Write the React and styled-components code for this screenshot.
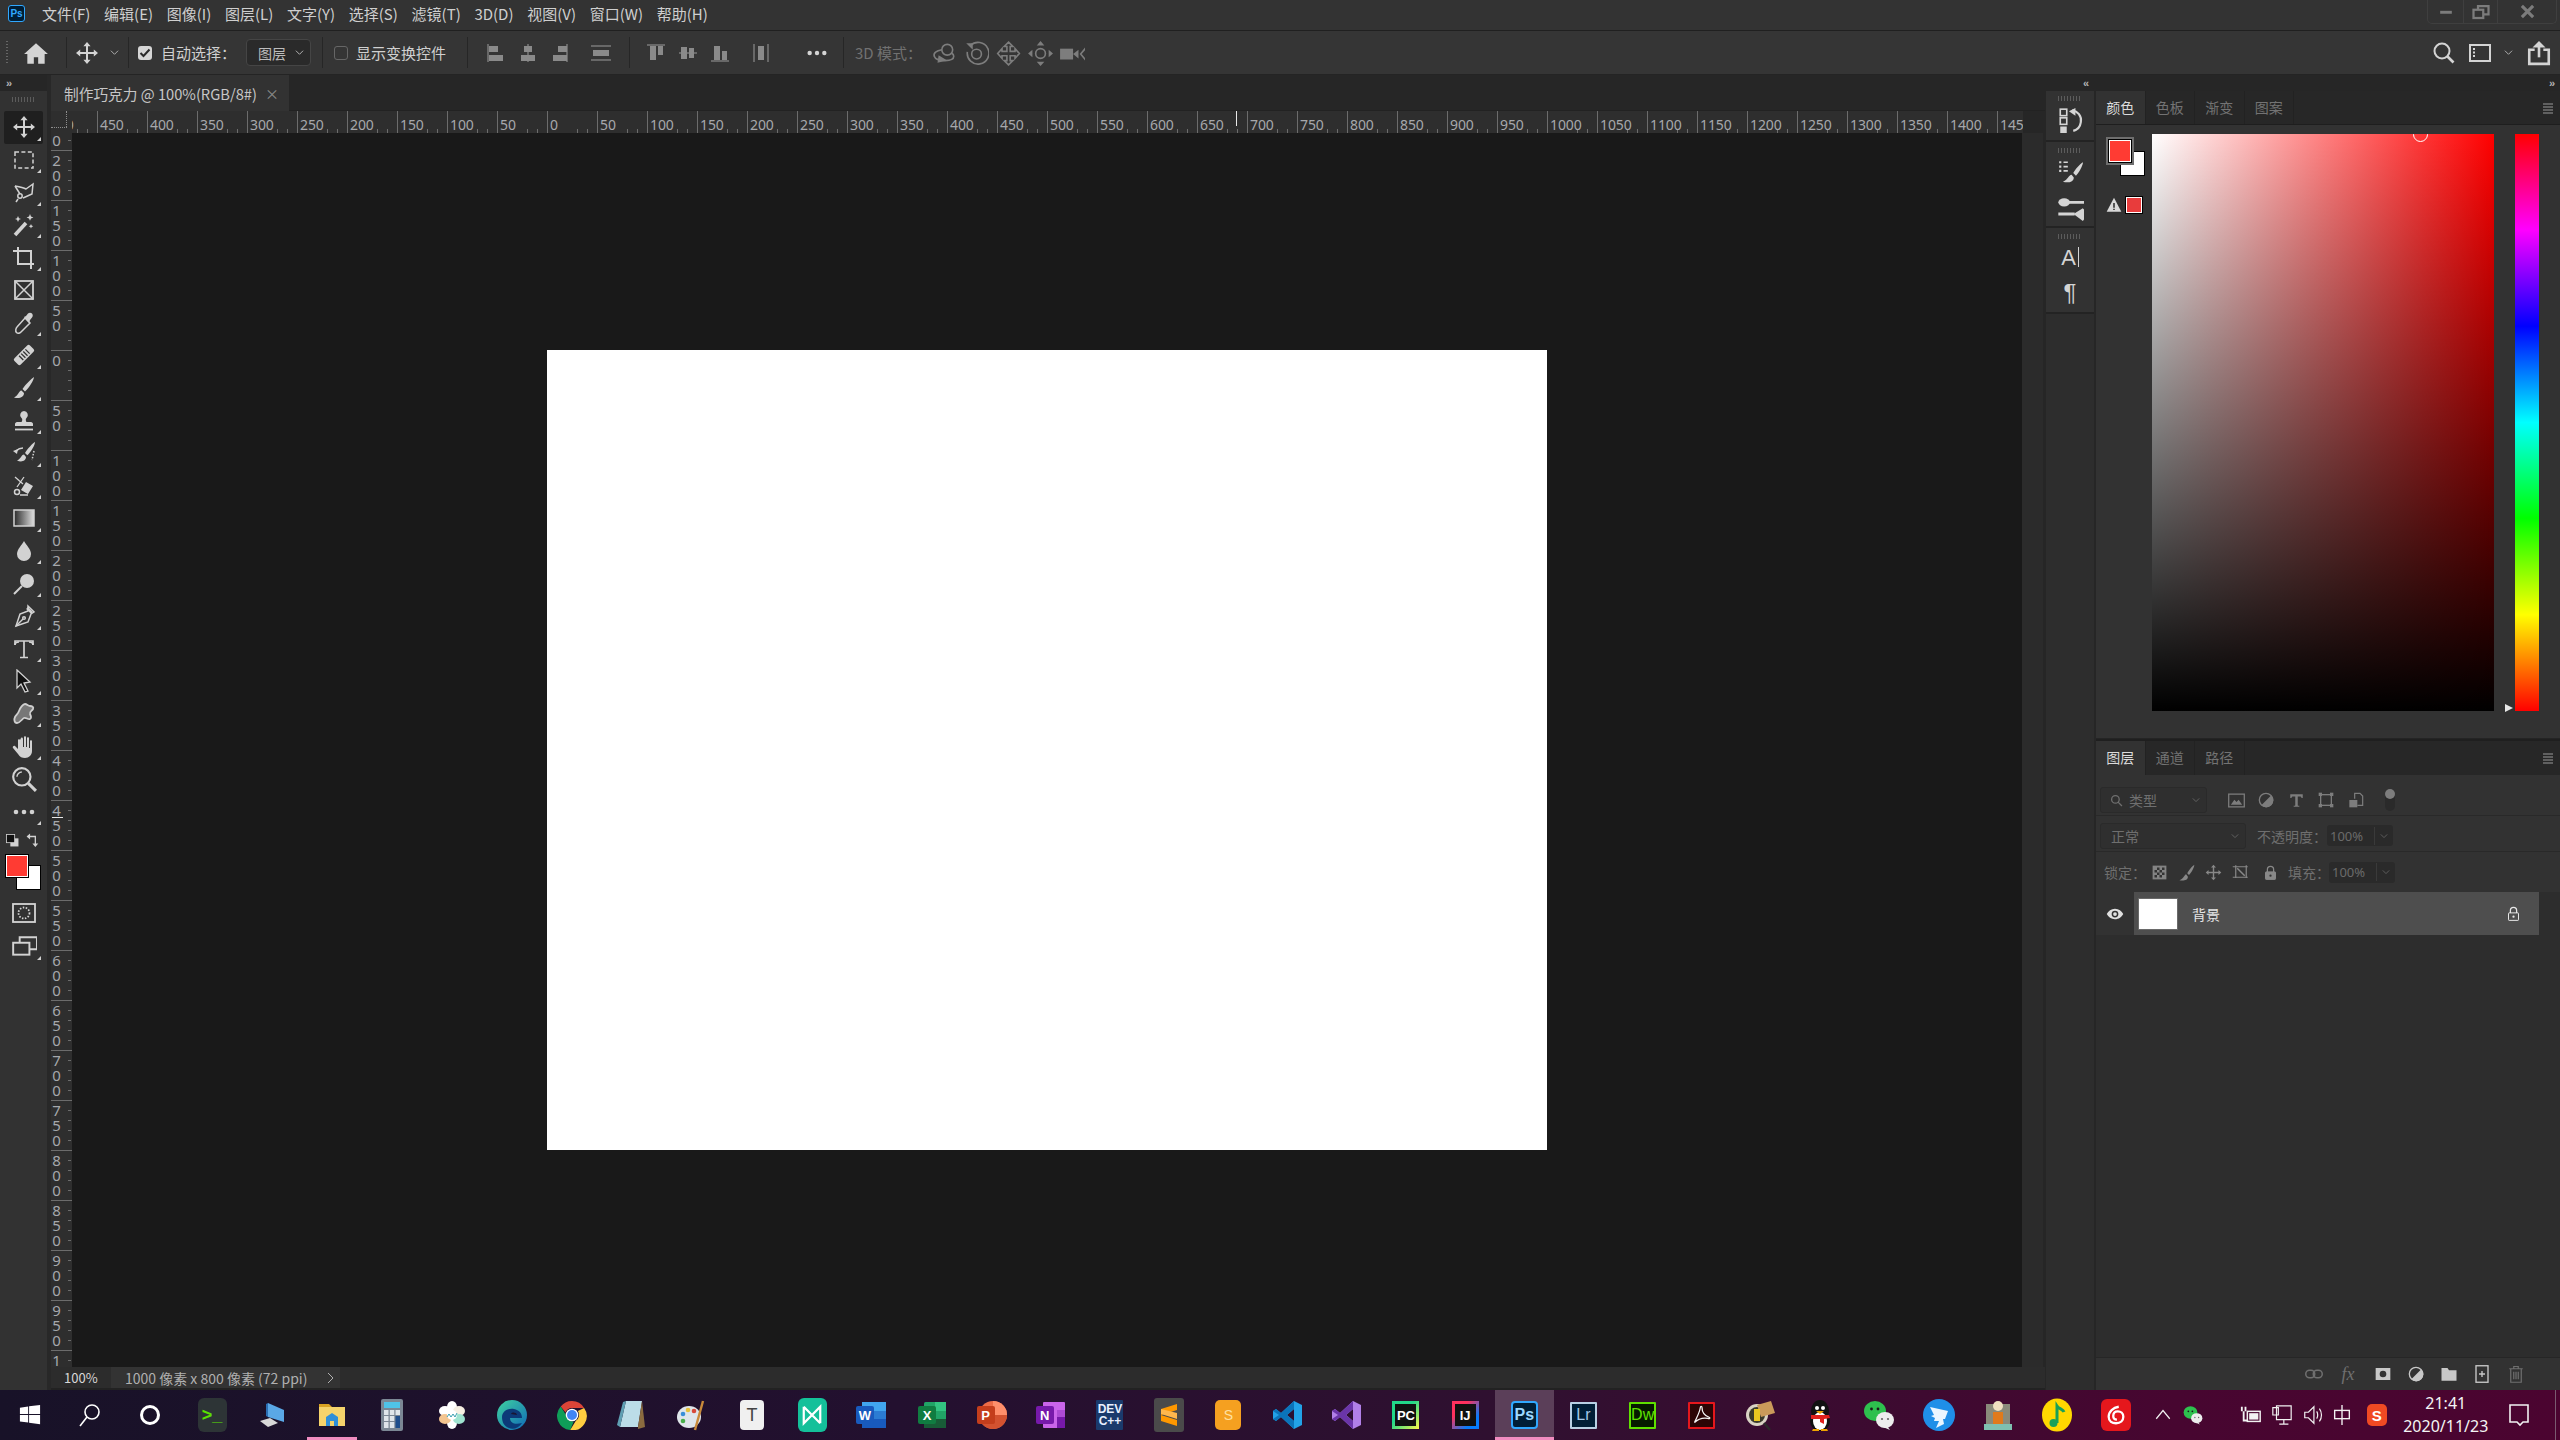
import styled, { createGlobalStyle } from 'styled-components'

const GlobalStyle = createGlobalStyle`
  html, body {
    margin: 0;
    padding: 0;
    background: #323232;
    font-family: "Noto Sans CJK SC", "Noto Sans", sans-serif;
  }
  * { box-sizing: border-box; }
`

const Frame = styled.div`
  width: 2560px;
  height: 1440px;
  display: flex;
  flex-direction: column;
  overflow: hidden;
  background: #323232;
`

/* ---------- menu bar ---------- */
const MenuBar = styled.div`
  height: 31px;
  flex: none;
  padding-bottom: 3px;
  display: flex;
  align-items: center;
  background: #333333;
  border-bottom: 1px solid #202020;
  color: #cfcfcf;
  font-size: 15px;
`
const PsLogo = styled.div`
  width: 17px;
  height: 17px;
  margin: 0 17px 0 8px;
  border: 1px solid #31a8ff;
  border-radius: 3px;
  background: #001e36;
  color: #31a8ff;
  font: 700 10px/15px "Liberation Sans", sans-serif;
  text-align: center;
`
const MenuItem = styled.span`
  margin-right: 13.7px;
  white-space: nowrap;
`
const WindowButtons = styled.div`
  margin-left: auto;
  margin-right: 3px;
  align-self: flex-start;
  height: 24px;
  display: flex;
  border: 1px solid #3f3f3f;
  border-top: none;
  border-radius: 0 0 5px 5px;
  color: #7c7c7c;
`
const WindowButton = styled.div`
  width: ${p => p.$w}px;
  display: flex;
  align-items: center;
  justify-content: center;
  border-left: ${p => (p.$first ? 'none' : '1px solid #3f3f3f')};
`

/* ---------- options bar ---------- */
const OptionsBar = styled.div`
  height: 44px;
  flex: none;
  display: flex;
  align-items: center;
  background: #353535;
  border-bottom: 1px solid #242424;
  color: #d0d0d0;
  font-size: 15px;
`
const Grip = styled.div`
  width: 2px;
  height: 24px;
  margin: 0 6px;
  background: repeating-linear-gradient(#666 0 1px, transparent 1px 3px);
`
const Slot = styled.div`
  width: ${p => p.$w || 32}px;
  margin-left: ${p => p.$ml || 0}px;
  margin-top: ${p => p.$mt || 0}px;
  flex: none;
  display: flex;
  align-items: center;
  justify-content: center;
  color: ${p => p.$color || '#d4d4d4'};
`
const Divider = styled.div`
  width: 1px;
  height: 31px;
  flex: none;
  margin-left: ${p => p.$ml || 0}px;
  background: #262626;
`
const CheckBox = styled.div`
  width: 14px;
  height: 14px;
  flex: none;
  margin-left: ${p => p.$ml || 0}px;
  border-radius: 3px;
  display: flex;
  align-items: center;
  justify-content: center;
  background: ${p => (p.$on ? '#d6d6d6' : 'transparent')};
  border: ${p => (p.$on ? 'none' : '1px solid #666')};
  color: #2a2a2a;
`
const OptLabel = styled.span`
  width: ${p => p.$w}px;
  margin-left: ${p => p.$ml || 0}px;
  flex: none;
  white-space: nowrap;
  color: ${p => p.$color || '#d0d0d0'};
`
const OptSelect = styled.div`
  width: 65px;
  height: 27px;
  flex: none;
  margin-left: ${p => p.$ml || 0}px;
  padding: 0 6px 0 11px;
  display: flex;
  align-items: center;
  justify-content: space-between;
  border: 1px solid #454545;
  border-radius: 4px;
  background: #2a2a2a;
  font-size: 14px;
  color: #bdbdbd;
`
const Spacer = styled.div`
  flex: 1;
`

/* ---------- workspace ---------- */
const Workspace = styled.div`
  flex: 1;
  min-height: 0;
  display: flex;
`
const ToolColumn = styled.div`
  width: 51px;
  flex: none;
  display: flex;
  flex-direction: column;
  border-right: 4px solid #282828;
  background: #323232;
`
const CollapseStrip = styled.div`
  height: 16px;
  flex: none;
  display: flex;
  align-items: center;
  justify-content: ${p => p.$align || 'flex-start'};
  padding: 0 6px;
  background: #262626;
  color: #b4b4b4;
  font: 700 11px/16px "Liberation Sans", sans-serif;
  letter-spacing: -1px;
`
const GripH = styled.div`
  width: ${p => p.$w || 24}px;
  height: 5px;
  flex: none;
  margin: ${p => p.$m || '6px auto 9px'};
  background: repeating-linear-gradient(90deg, #5c5c5c 0 1px, transparent 1px 3px);
`
const Tool = styled.div`
  position: relative;
  width: 39px;
  height: 32.6px;
  margin-left: 4px;
  margin-top: ${p => p.$mt || 0}px;
  flex: none;
  display: flex;
  align-items: center;
  justify-content: center;
  color: #d2d2d2;
  border-radius: 2px;
  background: ${p => (p.$active ? '#1f1f1f' : 'transparent')};
  &::after {
    content: '';
    display: ${p => (p.$more ? 'block' : 'none')};
    position: absolute;
    right: 2px;
    bottom: 3px;
    border-style: solid;
    border-width: 0 0 4px 4px;
    border-color: transparent transparent #cfcfcf transparent;
  }
`
const SwapRow = styled.div`
  height: 22px;
  margin-top: 1px;
  padding: 0 7px 0 6px;
  flex: none;
  display: flex;
  align-items: center;
  justify-content: space-between;
  color: #d2d2d2;
`
const ToolWell = styled.div`
  position: relative;
  width: 36px;
  height: 36px;
  margin: 3px 0 0 5px;
  flex: none;
`
const FgSwatch = styled.div`
  position: absolute;
  left: ${p => p.$x}px;
  top: ${p => p.$y}px;
  width: ${p => p.$s}px;
  height: ${p => p.$s}px;
  background: ${p => p.$color};
  border: 1px solid #fff;
  box-shadow: 0 0 0 1px #000${p => (p.$ring ? ', 0 0 0 3px #6e6e6e' : '')};
`

/* ---------- document ---------- */
const DocColumn = styled.div`
  width: 1994px;
  flex: none;
  display: flex;
  flex-direction: column;
  background: #262626;
`
const TabStrip = styled.div`
  height: 36px;
  flex: none;
  background: #262626;
  border-bottom: 1px solid #222;
`
const DocTab = styled.div`
  width: 238px;
  height: 36px;
  padding-left: 13px;
  display: flex;
  align-items: center;
  gap: 8px;
  background: #323232;
  color: #c6c6c6;
  font-size: 14.7px;
  white-space: nowrap;
`
const CloseX = styled.span`
  color: #8a8a8a;
  font-size: 14px;
`
const RulerRow = styled.div`
  height: 22px;
  flex: none;
  display: flex;
  background: #262626;
`
const RulerCorner = styled.div`
  position: relative;
  width: 21px;
  flex: none;
  background: #2e2e2e;
  &::before {
    content: '';
    position: absolute;
    left: 15px;
    top: 0;
    height: 16px;
    border-left: 1px dotted #8d8d8d;
  }
  &::after {
    content: '';
    position: absolute;
    left: 0;
    top: 16px;
    width: 16px;
    border-top: 1px dotted #8d8d8d;
  }
`
const HRuler = styled.div`
  position: relative;
  width: 1951px;
  flex: none;
  overflow: hidden;
  display: flex;
  background: #2e2e2e;
`
const HCell = styled.div`
  width: 50px;
  flex: none;
  margin-left: ${p => p.$ml || 0}px;
  padding-left: 2px;
  border-left: 1px solid #6c6c6c;
  color: #a6a8ac;
  font: 14px/27px "Noto Sans", sans-serif;
  letter-spacing: -0.1px;
  white-space: nowrap;
  background:
    linear-gradient(#6c6c6c, #6c6c6c) 29px 18px / 1px 4px no-repeat,
    linear-gradient(#6c6c6c, #6c6c6c) 39px 18px / 1px 4px no-repeat;
`
const RulerCursor = styled.div`
  position: absolute;
  left: ${p => p.$x}px;
  top: 0;
  width: 1px;
  height: 15px;
  background: #e8e8e8;
`
const DocMain = styled.div`
  flex: 1;
  min-height: 0;
  display: flex;
`
const VRuler = styled.div`
  position: relative;
  width: 21px;
  flex: none;
  overflow: hidden;
  background: #2e2e2e;
`
const VCell = styled.div`
  height: 50px;
  margin-top: ${p => p.$mt || 0}px;
  padding-top: 2px;
  border-top: 1px solid #6c6c6c;
  color: #a6a8ac;
  font: 15px/15px "Noto Sans", sans-serif;
  background: linear-gradient(#6c6c6c 1px, transparent 1px) right 1px top 9px / 3px 10px repeat-y;
`
const VDigit = styled.div`
  height: 15px;
  width: 11px;
  text-align: center;
`
const VCursor = styled.div`
  position: absolute;
  left: 1px;
  top: ${p => p.$y}px;
  width: 11px;
  height: 1px;
  background: #e8e8e8;
`
const CanvasArea = styled.div`
  flex: 1;
  display: flex;
  align-items: center;
  justify-content: center;
  background: #191919;
`
const Paper = styled.div`
  width: 1000px;
  height: 800px;
  background: #fff;
`
const VScroll = styled.div`
  width: 23px;
  flex: none;
  background: #2b2b2b;
  border-right: 2px solid #262626;
`
const StatusBar = styled.div`
  height: 23px;
  flex: none;
  display: flex;
  background: #2c2c2c;
  border-bottom: 2px solid #222;
  font-size: 14px;
  color: #b0b0b0;
`
const ZoomCell = styled.div`
  width: 60px;
  padding-left: 13px;
  color: #d8d8d8;
  font-size: 13px;
  line-height: 21px;
`
const DocInfo = styled.div`
  width: 229px;
  padding: 0 6px 0 14px;
  display: flex;
  align-items: center;
  justify-content: space-between;
  background: #333;
  white-space: nowrap;
`

/* ---------- right side ---------- */
const IconDock = styled.div`
  width: 51px;
  flex: none;
  display: flex;
  flex-direction: column;
  background: #2d2d2d;
  border-left: 1px solid #262626;
  border-right: 2px solid #262626;
`
const DockGroup = styled.div`
  height: ${p => p.$h}px;
  flex: none;
  display: flex;
  flex-direction: column;
  align-items: center;
  background: #323232;
  border-bottom: 2px solid #232323;
  color: #d4d4d4;
`
const DockIcon = styled.div`
  height: ${p => p.$h || 36}px;
  display: flex;
  align-items: center;
  justify-content: center;
`
const DockGlyph = styled.span`
  display: inline-block;
  font: ${p => p.$size}px/1 "Liberation Sans", sans-serif;
  color: #d4d4d4;
`
const Caret = styled.span`
  display: inline-block;
  width: 1px;
  height: 20px;
  margin-left: 2px;
  vertical-align: -2px;
  background: #d4d4d4;
`
const Panels = styled.div`
  flex: 1;
  min-width: 0;
  display: flex;
  flex-direction: column;
`
const PanelTabs = styled.div`
  height: 34px;
  flex: none;
  display: flex;
  align-items: stretch;
  background: #272727;
  border-bottom: ${p => (p.$flat ? 'none' : '1px solid #1e1e1e')};
  font-size: 14px;
`
const PanelTab = styled.div`
  width: 49.5px;
  padding-bottom: 2px;
  display: flex;
  align-items: center;
  justify-content: center;
  color: ${p => (p.$active ? '#dcdcdc' : '#737373')};
  background: ${p => (p.$active ? '#323232' : 'transparent')};
  border-right: 1px solid #222;
`
const PanelMenu = styled.div`
  margin-left: auto;
  padding-right: 6px;
  display: flex;
  align-items: center;
  color: #9a9a9a;
`
const ColorPanel = styled.div`
  height: 648px;
  flex: none;
  display: flex;
  flex-direction: column;
  background: #323232;
  border-bottom: 1px solid #242424;
`
const ColorBody = styled.div`
  padding-top: 9px;
  display: flex;
`
const SwatchColumn = styled.div`
  width: 56px;
  flex: none;
  display: flex;
  flex-direction: column;
  align-items: flex-start;
`
const PanelWell = styled.div`
  position: relative;
  width: 40px;
  height: 40px;
  margin: 3px 0 0 10px;
`
const GamutRow = styled.div`
  margin: 20px 0 0 10px;
  display: flex;
  align-items: center;
  gap: 4px;
  color: #d8d8d8;
`
const GamutSwatch = styled.div`
  width: 16px;
  height: 16px;
  background: #e83c3c;
  border: 1px solid #fff;
  box-shadow: 0 0 0 1px #000;
`
const ColorField = styled.div`
  position: relative;
  width: 342px;
  height: 577px;
  overflow: hidden;
  background: linear-gradient(to top, #000, rgba(0, 0, 0, 0)), linear-gradient(to right, #fff, #f00);
`
const FieldMarker = styled.div`
  position: absolute;
  left: 261px;
  top: -7px;
  width: 15px;
  height: 15px;
  border: 1px solid #fff;
  border-radius: 50%;
`
const HueWrap = styled.div`
  position: relative;
  width: 24px;
  height: 577px;
  margin-left: 21px;
  background: linear-gradient(to bottom, #f00 0%, #f0f 16.6%, #00f 33.3%, #0ff 50%, #0f0 66.6%, #ff0 83.3%, #f00 100%);
`
const HueArrow = styled.div`
  position: absolute;
  left: -10px;
  bottom: -1px;
  border-style: solid;
  border-width: 4.5px 0 4.5px 8px;
  border-color: transparent transparent transparent #e8e8e8;
`
const PanelGap = styled.div`
  height: 2px;
  flex: none;
  background: #1f1f1f;
`
const LayersPanel = styled.div`
  flex: 1;
  min-height: 0;
  display: flex;
  flex-direction: column;
  background: #323232;
`
const LayerRow = styled.div`
  height: ${p => p.$h}px;
  flex: none;
  padding: ${p => p.$pt || 0}px 0 0 4px;
  display: flex;
  align-items: center;
  border-bottom: ${p => (p.$line ? '1px solid #292929' : 'none')};
  color: #6f6f6f;
  font-size: 14px;
`
const DimSelect = styled.div`
  width: ${p => p.$w}px;
  height: 26px;
  flex: none;
  padding: 0 6px 0 ${p => p.$pl || 10}px;
  display: flex;
  align-items: center;
  gap: 6px;
  border: 1px solid #2a2a2a;
  border-radius: 3px;
  background: #2f2f2f;
  color: #6f6f6f;
`
const PushRight = styled.span`
  margin-left: auto;
  display: flex;
`
const FilterIcon = styled.div`
  width: 30px;
  flex: none;
  margin-left: ${p => p.$ml || 0}px;
  display: flex;
  justify-content: center;
  color: #7d7d7d;
`
const Toggle = styled.div`
  position: relative;
  width: 10px;
  height: 21px;
  margin-left: 14px;
  border-radius: 5px;
  background: #2a2a2a;
  &::after {
    content: '';
    position: absolute;
    left: 0;
    top: -1px;
    width: 10px;
    height: 10px;
    border-radius: 50%;
    background: #7d7d7d;
  }
`
const PercentBox = styled.div`
  width: 66px;
  height: 21px;
  flex: none;
  margin-left: ${p => p.$ml || 0}px;
  display: flex;
  align-items: center;
  background: #2a2a2a;
  border-radius: 3px;
  color: #6a6a6a;
  font: 13px "Noto Sans", sans-serif;
`
const PercentValue = styled.span`
  width: 48px;
  padding-left: 3px;
  border-right: 1px solid #3a3a3a;
`
const PercentArrow = styled.span`
  flex: 1;
  display: flex;
  justify-content: center;
`
const LockIcon = styled.div`
  width: ${p => p.$w || 28}px;
  flex: none;
  display: flex;
  justify-content: center;
  color: #888;
`
const LayerList = styled.div`
  flex: 1;
  min-height: 0;
  background: #2d2d2d;
  display: flex;
  flex-direction: column;
`
const LayerItem = styled.div`
  height: 43px;
  flex: none;
  display: flex;
`
const EyeCell = styled.div`
  width: 38px;
  flex: none;
  display: flex;
  align-items: center;
  justify-content: center;
  background: #323232;
  color: #e0e0e0;
`
const LayerBody = styled.div`
  width: 405px;
  display: flex;
  align-items: center;
  padding: 0 18px 0 5px;
  background: #4e4e4e;
  color: #e6e6e6;
  font-size: 14px;
`
const Thumb = styled.div`
  width: 38px;
  height: 30px;
  margin-right: 15px;
  background: #fff;
  box-shadow: 0 0 0 1px #6a6a6a;
`
const PanelFooter = styled.div`
  height: 33px;
  flex: none;
  padding-left: 201px;
  display: flex;
  align-items: center;
  background: #323232;
  border-top: 1px solid #262626;
`
const FooterIcon = styled.div`
  width: ${p => p.$w}px;
  flex: none;
  display: flex;
  justify-content: center;
  color: ${p => p.$color};
`
const FxText = styled.span`
  font: italic 18px/18px "Liberation Serif", serif;
  color: #6f6f6f;
`

/* ---------- taskbar ---------- */
const Taskbar = styled.div`
  height: 50px;
  flex: none;
  display: flex;
  align-items: stretch;
  background: linear-gradient(90deg, #181228 0%, #23102f 35%, #301030 60%, #470630 85%, #4b0430 100%);
  color: #fff;
`
const TaskButton = styled.div`
  position: relative;
  width: ${p => p.$w}px;
  margin-left: ${p => p.$ml || 0}px;
  flex: none;
  display: flex;
  align-items: center;
  justify-content: center;
  background: ${p => (p.$active ? '#5b3f59' : 'transparent')};
  &::after {
    content: '';
    display: ${p => (p.$open ? 'block' : 'none')};
    position: absolute;
    left: ${p => (p.$active ? 0 : 5)}px;
    right: ${p => (p.$active ? 0 : 5)}px;
    bottom: 0;
    height: 3px;
    background: #f08cc0;
  }
`
const Tile = styled.div`
  width: ${p => p.$w || 28}px;
  height: ${p => p.$h || 28}px;
  padding: ${p => p.$pad || 0}px;
  display: flex;
  align-items: center;
  justify-content: center;
  background: ${p => p.$bg};
  color: ${p => p.$color || '#fff'};
  border: ${p => (p.$border ? `2px solid ${p.$border}` : 'none')};
  border-radius: ${p => p.$r ?? 3}px;
  font: ${p => p.$weight || 400} ${p => p.$size || 16}px/1 "Liberation Sans", sans-serif;
  white-space: pre;
  text-align: center;
`
const Tray = styled.div`
  display: flex;
  align-items: center;
  flex: none;
`
const TraySlot = styled.div`
  width: ${p => p.$w}px;
  margin-left: ${p => p.$ml || 0}px;
  flex: none;
  display: flex;
  justify-content: center;
  color: #f2f2f2;
`
const Clock = styled.div`
  width: 98px;
  flex: none;
  text-align: center;
  font-size: 16px;
  line-height: 23px;
  color: #f4f4f4;
  font-family: "Noto Sans", sans-serif;
`
const ShowDesktop = styled.div`
  width: 1px;
  height: 50px;
  margin-left: 12px;
  background: #7a5a70;
`

/* ---------- drawings ---------- */
const Ic = ({ s = 24, w, h, vb = '0 0 24 24', children, ...rest }) => (
  <svg width={w || s} height={h || s} viewBox={vb} fill="none" stroke="currentColor" strokeWidth="1.5" {...rest}>
    {children}
  </svg>
)
const Solid = { fill: 'currentColor', stroke: 'none' }

const Chevron = ({ s = 9 }) => (
  <Ic s={s} vb="0 0 10 10" strokeWidth="1"><path d="M1 3l4 4 4-4" /></Ic>
)

const MoveIcon = ({ s = 24 }) => (
  <Ic s={s}><path {...Solid} d="M12 1l3.600 4.200H13V11h5.800V8.400L23 12l-4.200 3.600V13H13v5.800h2.600L12 23l-3.600-4.200H11V13H5.200v2.600L1 12l4.200-3.600V11H11V5.200H8.400z" /></Ic>
)

const toolIcons = {
  marquee: <Ic><rect x="3" y="4" width="18" height="16" strokeDasharray="4 2.400" /></Ic>,
  lasso: <Ic><path d="M3 6c5 1 9 2 11 3l7-5-1 10-9 4" /><circle cx="8" cy="16" r="2.200" /><path d="M6 19l-2 3" /><path d="M3 6l5 8" /></Ic>,
  wand: <Ic><path strokeWidth="3.600" d="M3 22L14 10" /><path {...Solid} d="M6 3l1 2.200L9 6l-2 .8L6 9l-1-2.200L3 6l2-.8zM18 1l1 2.400 2.400 1-2.400 1-1 2.400-1-2.400-2.400-1 2.400-1zM19 11l.7 1.600 1.600.7-1.600.7-.7 1.600-.7-1.600-1.600-.7 1.600-.7z" /></Ic>,
  crop: <Ic strokeWidth="2"><path d="M1 5h4M6 1v17h16M6 5h13v14" /><path d="M19 23v-4" /></Ic>,
  frame: <Ic><rect x="3" y="3" width="18" height="18" strokeWidth="1.800" /><path d="M3 3l18 18M21 3L3 21" /></Ic>,
  eyedrop: <Ic><path d="M13 7l5 5-9 9c-1 1-3 2-4.500 .5S4 17 5 16z" /><path {...Solid} d="M12 6l2-1 2-2.500c1-1 3-1 4 0s1 3 0 4L18 9l-1 3z" /></Ic>,
  heal: <Ic><g transform="rotate(-45 12 12)"><rect {...Solid} x="1" y="7.500" width="22" height="9" rx="2" /><path stroke="#323232" strokeWidth="1.300" d="M8 9v6M11 9v6M14 9v6M17 9v6" /></g></Ic>,
  brush: <Ic><path {...Solid} d="M22 1c-2 1-9 8-11.500 12l2.500 2.500C17 12 22 4 22 1zM9.500 14.500C6.500 15 7 19 2 21.500c5 1.500 10 0 10-4.500z" /></Ic>,
  stamp: <Ic><path {...Solid} d="M12 2a4 4 0 00-2.500 7c1 1 1 2.500 0 4H5c-1 0-2 1-2 2v2h18v-2c0-1-1-2-2-2h-4.500c-1-1.500-1-3 0-4A4 4 0 0012 2z" /><path strokeWidth="1.800" d="M3 20.500h18" /></Ic>,
  history: <Ic><path {...Solid} d="M23 1c-2 1-8 7-10 11l2.300 2.300C19 11 23 4 23 1zM12 13.500c-3 .5-2.500 4-7 6 4.500 2 9 .5 9-3.500z" /><path strokeWidth="1.300" d="M11 7C8 7 6 8 4 10" /><path {...Solid} d="M1 10l5-2-1 5z" /><path strokeDasharray="1.500 1.500" d="M22 10l-2 9" /></Ic>,
  eraser: <Ic><path {...Solid} d="M14 8l7 4-5 8-7-4z" /><path d="M10 15l6 4" /><circle cx="5" cy="18" r="2.500" /><path strokeWidth="1.300" d="M3 3l8 7M12 3l-7 10M8 21h8" /></Ic>,
  gradient: (
    <Ic>
      <defs>
        <linearGradient id="toolGrad">
          <stop offset="0" stopColor="#2a2a2a" />
          <stop offset="1" stopColor="#e0e0e0" />
        </linearGradient>
      </defs>
      <rect x="2" y="4" width="20" height="16" fill="url(#toolGrad)" />
    </Ic>
  ),
  blur: <Ic><path {...Solid} d="M12 2c2 4 7 8 7 13a7 7 0 01-14 0c0-5 5-9 7-13z" /></Ic>,
  dodge: <Ic><circle {...Solid} cx="15" cy="9" r="7" /><path strokeWidth="2" d="M10 14l-8 8" /></Ic>,
  pen: <Ic><path d="M16 2l6 6-3 2-3 8-12 4 4-12 8-3z" /><path d="M4 22l7-7" /><circle cx="12" cy="14" r="1.300" /><path strokeWidth="2.500" d="M15 4l5 5" /></Ic>,
  type: <Ic strokeWidth="1.700"><path d="M3 8V4h18v4M12 4v16M8 20.500h8" /><path d="M3 8c0-2 2-3 4-3M21 8c0-2-2-3-4-3" /></Ic>,
  arrow: <Ic><path fill="#111" stroke="#d2d2d2" strokeWidth="1.300" d="M5 1l13 12-6 1 4 8-3 1-4-8-4 4z" /></Ic>,
  shape: <Ic><path strokeWidth="1.800" fill="#777" stroke="#cfcfcf" d="M13 2c2 0 3 2 5 2s4 1 3 3-4 3-3 5 2 4 0 5-4-2-6-1-4 5-7 5-3-4-2-6 3-3 4-6 4-7 6-7z" /></Ic>,
  hand: <Ic><path {...Solid} d="M9 3c1-1 2 0 2 1v8h1V2c0-1 2-1 2 0v10h1V3c0-1 2-1 2 0v10h1V6c0-1 2-1 2 0v10c0 4-3 7-7 7-3 0-5-1-7-4l-5-6c-1-1 1-3 2-2l3 3V5c0-1 2-1 2 0z" /></Ic>,
  zoom: <Ic s={26} strokeWidth="2"><circle cx="10" cy="10" r="8" /><path strokeWidth="2.800" d="M16 16l7 7" /><path strokeWidth="1.300" d="M5.500 10a4.500 4.500 0 014.500-4.500" /></Ic>,
  dots: <Ic><circle {...Solid} cx="4" cy="12" r="2.300" /><circle {...Solid} cx="12" cy="12" r="2.300" /><circle {...Solid} cx="20" cy="12" r="2.300" /></Ic>,
}

const toolList = [
  ['marquee', 1], ['lasso', 1], ['wand', 1], ['crop', 1], ['frame', 0], ['eyedrop', 1], ['heal', 1],
  ['brush', 1], ['stamp', 1], ['history', 1], ['eraser', 1], ['gradient', 1], ['blur', 1], ['dodge', 1],
  ['pen', 1], ['type', 1], ['arrow', 1], ['shape', 1], ['hand', 1], ['zoom', 0], ['dots', 1],
]

const AlignIcon = ({ bars, line }) => (
  <Ic s={24}>
    {line && <path stroke="#9c9c9c" strokeWidth="1" d={line} />}
    {bars.map((b, i) => (
      <rect key={i} x={b[0]} y={b[1]} width={b[2]} height={b[3]} fill="#8a8a8a" stroke="none" />
    ))}
  </Ic>
)

const alignA = [
  { line: 'M4 3v18', bars: [[5, 5, 9, 6], [5, 14, 14, 6]] },
  { line: 'M12 3v18', bars: [[8, 5, 8, 6], [5, 14, 14, 6]] },
  { line: 'M20 3v18', bars: [[11, 5, 9, 6], [6, 14, 14, 6]] },
  { line: 'M2 5h20M2 19h20', bars: [[4, 9, 16, 6]] },
]
const alignB = [
  { line: 'M3 4h18', bars: [[6, 5, 6, 14], [14, 5, 5, 9]] },
  { line: 'M3 12h18', bars: [[5, 6, 6, 12], [13, 7, 5, 10]] },
  { line: 'M3 20h18', bars: [[6, 5, 6, 14], [14, 10, 5, 9]] },
  { line: 'M5 3v18M19 3v18', bars: [[9, 5, 6, 14]] },
]

function MoveIconOutline() {
  return (
    <Ic s={26}>
      <path d="M12.500 2l4 4h-2.500v4.500h4.500V8l4 4.500-4 4.500v-2.500H14V19h2.500l-4 4-4-4H11v-4.500H6.500V17l-4-4.500 4-4.500v2.500H11V6H8.500z" />
    </Ic>
  )
}

const threeD = [
  <Ic key="a" s={26}><circle cx="15" cy="9" r="5" /><path d="M10 9C5 10 2 12 3 15s6 4 10 4 8-1 8-4c0-1-.5-2-2-3" /><path {...Solid} d="M7 14l8 5-9 2z" /></Ic>,
  <Ic key="b" s={26}><circle cx="12.500" cy="13" r="4.500" /><path d="M7 5a10 10 0 11-3 6" /><path {...Solid} d="M3 3h6v6z" /></Ic>,
  <MoveIconOutline key="c" />,
  <Ic key="d" s={26}><circle cx="12.500" cy="12.500" r="4.500" /><path {...Solid} d="M12.500 1l3.500 4h-7zM12.500 24l-3.500-4h7zM1 12.500L5 9v7zM24 12.500L20 16V9z" /></Ic>,
  <Ic key="e" s={26}><rect {...Solid} x="1" y="8" width="12" height="10" /><path {...Solid} d="M13 13l5-4v8z" /><path d="M25 7l-5 6 5 6" /></Ic>,
]

/* taskbar pictures */
const WinLogo = () => (
  <Ic s={22}><path {...Solid} d="M1 4l9-1.300V11H1zM11 2.500L23 1v10H11zM1 12h9v8.300L1 19zM11 12h12v10l-12-1.500z" /></Ic>
)
const SearchGlass = () => (
  <Ic s={24} strokeWidth="1.600"><circle cx="14" cy="9" r="7" /><path d="M9 14l-7 9" /></Ic>
)
const Cortana = () => <Ic s={24} strokeWidth="3"><circle cx="12" cy="12" r="8.500" /></Ic>
const PcIcon = () => (
  <Ic s={32} vb="0 0 32 32" stroke="none">
    <path fill="#5aa8e6" d="M12 4l16 7v12l-16-5z" />
    <path fill="#2b6fb4" d="M12 4v14l-2-1V5z" />
    <path fill="#d8d8d8" d="M4 22l10-3 8 5-10 4z" />
  </Ic>
)
const FolderIcon = () => (
  <Ic s={30} vb="0 0 30 30" stroke="none">
    <path fill="#d9a223" d="M2 4h10l3 3h-13z" />
    <path fill="#f5d36b" d="M2 7h26v19H2z" />
    <path fill="#2f8fd8" d="M9 26v-9l6-4 6 4v9h-4v-5h-4v5z" />
  </Ic>
)
const CalcIcon = () => (
  <Tile $w={22} $h={32} $bg="#7b8794" $r={2}>
    <Ic w={18} h={28} vb="0 0 18 28" stroke="none">
      <rect x="1" y="1" width="16" height="6" fill="#4fc3e8" />
      <rect x="1" y="9" width="4.500" height="5" fill="#dfe5ea" /><rect x="6.800" y="9" width="4.500" height="5" fill="#dfe5ea" /><rect x="12.500" y="9" width="4.500" height="5" fill="#dfe5ea" />
      <rect x="1" y="15" width="4.500" height="5" fill="#dfe5ea" /><rect x="6.800" y="15" width="4.500" height="5" fill="#dfe5ea" /><rect x="12.500" y="15" width="4.500" height="12" fill="#1f4e8c" />
      <rect x="1" y="21" width="4.500" height="6" fill="#dfe5ea" /><rect x="6.800" y="21" width="4.500" height="6" fill="#dfe5ea" />
    </Ic>
  </Tile>
)
const FlowerIcon = () => (
  <Ic s={30} vb="0 0 30 30" stroke="none">
    <ellipse cx="15" cy="7" rx="5" ry="6" fill="#fff" /><ellipse cx="15" cy="23" rx="5" ry="6" fill="#fff" />
    <ellipse cx="8" cy="11" rx="6" ry="5" fill="#fff" /><ellipse cx="22" cy="11" rx="6" ry="5" fill="#f6efe2" />
    <ellipse cx="8" cy="19" rx="6" ry="5" fill="#f3c48f" /><ellipse cx="22" cy="19" rx="6" ry="5" fill="#9fe3d0" />
    <circle cx="15" cy="15" r="5" fill="#fff" />
    <path stroke="#3aa0b0" strokeWidth="1" fill="none" d="M10 17l2-3 2 3 2-3 2 3 2-4" />
  </Ic>
)
const EdgeIcon = () => (
  <Ic s={32} vb="0 0 32 32" stroke="none">
    <defs>
      <linearGradient id="edgeA" x1="0" y1="0" x2="1" y2="1">
        <stop offset="0" stopColor="#3fd3a0" />
        <stop offset="1" stopColor="#1069b8" />
      </linearGradient>
    </defs>
    <circle cx="16" cy="16" r="15" fill="url(#edgeA)" />
    <path fill="#0c3a78" d="M6 18c0-6 6-9 12-8 5 1 8 4 8 9H14c0 5 5 7 12 5-3 5-9 7-13 5-5-2-7-6-7-11z" />
    <path fill="#1a1633" d="M15 15c1-2 5-2 6 1z" />
  </Ic>
)
const ChromeIcon = () => (
  <Ic s={30} vb="0 0 30 30" stroke="none">
    <path fill="#db4437" d="M15 1a14 14 0 0112.100 7H15a7 7 0 00-6.500 4.500L3.700 6.600A14 14 0 0115 1z" />
    <path fill="#0f9d58" d="M3.700 6.600l5 8a7 7 0 008 6.900l-3.500 8.400A14 14 0 013.700 6.600z" />
    <path fill="#ffcd40" d="M27.100 8A14 14 0 0113.200 29.900l5.500-9A7 7 0 0020.800 11z" />
    <circle cx="15" cy="15" r="6.300" fill="#fff" />
    <circle cx="15" cy="15" r="5" fill="#4285f4" />
  </Ic>
)
const NotepadIcon = () => (
  <Ic s={32} vb="0 0 32 32" stroke="none">
    <path fill="#bcdde8" d="M10 2h16l-4 26H4z" />
    <path fill="#5f9fb3" d="M4 28l6-26-3 1-6 23z" />
    <path fill="#8a6b3f" d="M26 2l3 26-7 2 0-2z" />
  </Ic>
)
const PaletteIcon = () => (
  <Ic s={34} vb="0 0 34 34" stroke="none">
    <ellipse cx="14" cy="19" rx="12" ry="11" fill="#dfe6ea" />
    <circle cx="8" cy="16" r="2.300" fill="#3a8fd8" /><circle cx="13" cy="12" r="2.300" fill="#e8c23a" />
    <circle cx="19" cy="13" r="2.300" fill="#d84a3a" /><circle cx="8" cy="23" r="2.300" fill="#48b04a" />
    <path stroke="#c98a3a" strokeWidth="2.400" d="M28 3L20 32" />
  </Ic>
)
const MindTile = () => (
  <Tile $w={29} $h={34} $bg="#14c09a" $r={6}>
    <Ic s={22} stroke="#fff" strokeWidth="2.400"><path d="M3 3v18L21 3v18M3 3l9 9M21 21l-9-9" /></Ic>
  </Tile>
)
const WordIcon = () => (
  <Ic s={32} vb="0 0 32 32" stroke="none">
    <rect x="6" y="3" width="24" height="26" rx="1.500" fill="#2b7cd3" />
    <rect x="6" y="3" width="24" height="9" fill="#41a5ee" />
    <rect x="6" y="20" width="24" height="9" fill="#185abd" />
  </Ic>
)
const ExcelIcon = () => (
  <Ic s={32} vb="0 0 32 32" stroke="none">
    <rect x="8" y="3" width="22" height="26" rx="1.500" fill="#21a366" />
    <rect x="19" y="3" width="11" height="9" fill="#33c481" />
    <rect x="8" y="20" width="22" height="9" fill="#185c37" />
  </Ic>
)
const PptIcon = () => (
  <Ic s={32} vb="0 0 32 32" stroke="none">
    <circle cx="17" cy="16" r="14" fill="#ed6c47" />
    <path fill="#ff8f6b" d="M17 2a14 14 0 0114 14H17z" />
    <path fill="#d35230" d="M3 16h28a14 14 0 01-28 0z" />
  </Ic>
)
const OneNoteIcon = () => (
  <Ic s={32} vb="0 0 32 32" stroke="none">
    <rect x="8" y="3" width="22" height="26" rx="1" fill="#ca64ea" />
    <rect x="22" y="11" width="8" height="7" fill="#ae4bd5" />
    <rect x="22" y="18" width="8" height="11" fill="#7719aa" />
  </Ic>
)
const OverlayLetter = styled.div`
  position: absolute;
  left: ${p => p.$x}px;
  top: 50%;
  transform: translateY(-50%);
  width: 18px;
  height: 18px;
  display: flex;
  align-items: center;
  justify-content: center;
  background: ${p => p.$bg};
  color: #fff;
  border-radius: 2px;
  font: 700 13px/1 "Liberation Sans", sans-serif;
`
const IconStack = styled.div`
  position: relative;
  width: 32px;
  height: 32px;
`
const Letter = ({ bg, ch, x = 0, children }) => (
  <IconStack>
    {children}
    <OverlayLetter $bg={bg} $x={x}>{ch}</OverlayLetter>
  </IconStack>
)
const OrangeS = () => (
  <Tile $w={26} $h={30} $bg="#f5a020" $r={5} $size={14} $color="#ffe0a0">S</Tile>
)
const VsCode = () => (
  <Ic s={32} vb="0 0 32 32" stroke="none">
    <path fill="#22a3e8" d="M22 2l8 4v20l-8 4-13-12-5 4-3-2v-8l3-2 5 4zM22 10l-7 6 7 6z" />
    <path fill="#0b74ba" d="M22 2v8l-7 6 7 6v8L9 18l-5 4-3-2 6-4-6-4 3-2 5 4z" />
  </Ic>
)
const VsStudio = () => (
  <Ic s={32} vb="0 0 32 32" stroke="none">
    <path fill="#b180e8" d="M22 2l8 4v20l-8 4-13-12-5 4-3-2v-8l3-2 5 4zM22 10l-7 6 7 6z" />
    <path fill="#6a35a8" d="M22 2v8l-7 6 7 6v8L9 18l-5 4-3-2 6-4-6-4 3-2 5 4z" />
  </Ic>
)
const Sublime = () => (
  <Tile $w={30} $h={34} $bg="#4a4a4a" $r={3}>
    <Ic w={18} h={24} vb="0 0 18 24" stroke="none">
      <path fill="#ff9800" d="M17 1v6L1 12V6zM1 12l16 5v6L1 18z" />
      <path fill="#ffb74d" d="M1 11l16 5V10L1 6z" />
    </Ic>
  </Tile>
)
const IdeTile = ({ bg, children }) => (
  <Tile $w={27} $h={28} $bg={bg} $r={0} $pad={3}>
    <Tile $w={21} $h={22} $bg="#111" $r={0} $size={13} $weight={700}>{children}</Tile>
  </Tile>
)
const AcrobatGlyph = () => (
  <Ic s={20} stroke="#f4f4f4" strokeWidth="1.500"><path d="M3 21c2-5 6-11 7-18 0-2 2-2 2 0 0 6 3 10 9 12 1 1 0 2-2 1-6-1-11 0-16 5z" /></Ic>
)
const InspectIcon = () => (
  <Ic s={32} vb="0 0 32 32" stroke="none">
    <circle cx="12" cy="16" r="11" fill="#d9d3c4" />
    <circle cx="12" cy="16" r="8" fill="#3a3a2a" />
    <path fill="#c99a5a" d="M12 6l14-4 4 12-14 4z" />
    <rect x="9" y="10" width="6" height="12" fill="#e8c820" />
    <path stroke="#2a2a2a" strokeWidth="2.500" d="M19 24l6 7" />
  </Ic>
)
const QqIcon = () => (
  <Ic s={34} vb="0 0 34 34" stroke="none">
    <ellipse cx="17" cy="13" rx="9" ry="11" fill="#111" />
    <ellipse cx="17" cy="23" rx="10" ry="10" fill="#111" />
    <ellipse cx="17" cy="23" rx="7" ry="9" fill="#fff" />
    <circle cx="14" cy="10" r="2" fill="#fff" /><circle cx="20" cy="10" r="2" fill="#fff" />
    <path fill="#f0a400" d="M13 13h8l-4 3z" />
    <path fill="#e0201c" d="M8 17h18l1 3-6 1v5l-4-2v-3H8z" />
    <path fill="#f0a400" d="M10 31h6v2h-7zM18 31h6l1 2h-7z" />
  </Ic>
)
const WeChat = ({ s = 32 }) => (
  <Ic s={s} vb="0 0 32 32" stroke="none">
    <ellipse cx="12" cy="12" rx="11" ry="10" fill="#2ec04e" />
    <circle cx="8.500" cy="10" r="1.400" fill="#1a1a1a" /><circle cx="15" cy="10" r="1.400" fill="#1a1a1a" />
    <ellipse cx="22" cy="21" rx="9" ry="8" fill="#ededed" />
    <path fill="#ededed" d="M24 27l3 4-7-3z" />
    <circle cx="19" cy="20" r="1.100" fill="#666" /><circle cx="25" cy="20" r="1.100" fill="#666" />
  </Ic>
)
const Ding = () => (
  <Ic s={32} vb="0 0 32 32" stroke="none">
    <circle cx="16" cy="16" r="16" fill="#1f8fe8" />
    <path fill="#eaf6ff" d="M7 8l18 4-3 8-2 0 1 5-8 4 3-7h-5l1-3-4-2 3-1z" />
  </Ic>
)
const Figure = () => (
  <Ic s={34} vb="0 0 34 34" stroke="none">
    <rect x="5" y="6" width="24" height="20" fill="#8a8a7a" />
    <rect x="3" y="26" width="28" height="6" fill="#7fc0b0" />
    <path fill="#e07a1c" d="M12 14h10v12H12z" />
    <circle cx="17" cy="8" r="5" fill="#f0e0c0" />
  </Ic>
)
const QqMusic = () => (
  <Ic s={34} vb="0 0 34 34" stroke="none">
    <ellipse cx="17" cy="17" rx="15" ry="16.500" fill="#ffd800" />
    <path fill="none" stroke="#18a058" strokeWidth="3" d="M17 25V8c2 3 6 3 7 6" />
    <circle cx="13.500" cy="25" r="4" fill="#18a058" />
  </Ic>
)
const NetEase = () => (
  <Tile $w={30} $h={32} $bg="#e5171c" $r={6}>
    <Ic s={22} stroke="#fff" strokeWidth="2.500"><path d="M15 3c-6 1-11 5-11 11 0 5 4 7 8 7 5 0 8-3 8-7s-3-6-6-6-5 2-5 5 2 4 4 4" /></Ic>
  </Tile>
)

const taskItems = [
  <WinLogo />,
  <SearchGlass />,
  <Cortana />,
  <Tile $w={29} $h={34} $bg="#2d3436" $color="#5be000" $r={6} $size={18} $weight={700}>{'>_'}</Tile>,
  <PcIcon />,
  <FolderIcon />,
  <CalcIcon />,
  <FlowerIcon />,
  <EdgeIcon />,
  <ChromeIcon />,
  <NotepadIcon />,
  <PaletteIcon />,
  <Tile $w={24} $h={30} $bg="#f0f0f0" $color="#444" $r={4} $size={18}>T</Tile>,
  <MindTile />,
  <Letter bg="#185abd" ch="W"><WordIcon /></Letter>,
  <Letter bg="#107c41" ch="X" x={2}><ExcelIcon /></Letter>,
  <Letter bg="#c43e1c" ch="P" x={1}><PptIcon /></Letter>,
  <Letter bg="#7719aa" ch="N" x={1}><OneNoteIcon /></Letter>,
  <Tile $w={27} $h={30} $bg="#1a3a6c" $color="#e8f0ff" $r={1} $size={12} $weight={700}>{'DEV\nC++'}</Tile>,
  <Sublime />,
  <OrangeS />,
  <VsCode />,
  <VsStudio />,
  <IdeTile bg="linear-gradient(135deg, #21d789 40%, #fcf84a 100%)">PC</IdeTile>,
  <IdeTile bg="linear-gradient(135deg, #fe315d 30%, #087cfa 75%)">IJ</IdeTile>,
  <Tile $w={27} $h={28} $bg="#001e36" $color="#9cd8ff" $border="#31a8ff" $r={4} $size={16} $weight={700}>Ps</Tile>,
  <Tile $w={27} $h={27} $bg="#001e36" $color="#a5c8e8" $border="#b8d0e4" $r={1} $size={16}>Lr</Tile>,
  <Tile $w={27} $h={27} $bg="#061a00" $color="#5fe000" $border="#5fe000" $r={1} $size={16}>Dw</Tile>,
  <Tile $w={27} $h={27} $bg="#2a0505" $border="#e5171c" $r={1}><AcrobatGlyph /></Tile>,
  <InspectIcon />,
  <QqIcon />,
  <WeChat />,
  <Ding />,
  <Figure />,
  <QqMusic />,
  <NetEase />,
]

const Eye = () => (
  <Ic s={18} stroke="none"><path {...Solid} d="M12 5C7 5 3 8 1 12c2 4 6 7 11 7s9-3 11-7c-2-4-6-7-11-7zm0 2.500a4.500 4.500 0 110 9 4.500 4.500 0 010-9z" /><circle {...Solid} cx="12" cy="12" r="2.500" /></Ic>
)
const Padlock = ({ s = 16, solid }) => (
  <Ic s={s}>
    <path strokeWidth="2" d="M7 11V7a5 5 0 0110 0v4" />
    <rect x="4" y="11" width="16" height="12" rx="1" {...(solid ? { fill: 'currentColor' } : {})} strokeWidth="1.600" />
    <circle cx="12" cy="17" r="1.800" fill={solid ? '#323232' : 'currentColor'} stroke="none" />
  </Ic>
)

const menus = ['文件(F)', '编辑(E)', '图像(I)', '图层(L)', '文字(Y)', '选择(S)', '滤镜(T)', '3D(D)', '视图(V)', '窗口(W)', '帮助(H)']
const hValues = [500, 450, 400, 350, 300, 250, 200, 150, 100, 50, 0]
for (let i = 50; i <= 1450; i += 50) hValues.push(i)
const vValues = [250, 200, 150, 100, 50, 0]
for (let i = 50; i <= 1000; i += 50) vValues.push(i)

export default function App() {
  return (
    <Frame>
      <GlobalStyle />
      <MenuBar>
        <PsLogo>Ps</PsLogo>
        {menus.map(m => <MenuItem key={m}>{m}</MenuItem>)}
        <WindowButtons>
          <WindowButton $w={35} $first>
            <Ic s={14} stroke="none"><rect {...Solid} x="2" y="10" width="20" height="5" /></Ic>
          </WindowButton>
          <WindowButton $w={34}>
            <Ic s={18} strokeWidth="3"><rect x="2" y="9" width="13" height="11" /><path d="M8 8V4h14v11h-6" /></Ic>
          </WindowButton>
          <WindowButton $w={59}>
            <Ic s={15} strokeWidth="5"><path d="M3 3l18 18M21 3L3 21" /></Ic>
          </WindowButton>
        </WindowButtons>
      </MenuBar>

      <OptionsBar>
        <Grip />
        <Slot $w={44}>
          <Ic s={26}><path {...Solid} d="M12 3L1 13h3v9h6v-6h4v6h6v-9h3z" /></Ic>
        </Slot>
        <Divider $ml={8} />
        <Slot $w={40}><MoveIcon /></Slot>
        <Slot $w={14} $color="#b8b8b8"><Chevron /></Slot>
        <Divider $ml={7} />
        <CheckBox $on $ml={9}>
          <Ic s={12} strokeWidth="4"><path d="M3 12l6 6L21 5" /></Ic>
        </CheckBox>
        <OptLabel $w={76} $ml={9}>自动选择：</OptLabel>
        <OptSelect $ml={9}>图层<Chevron /></OptSelect>
        <Divider $ml={11} />
        <CheckBox $ml={11} />
        <OptLabel $w={90} $ml={8}>显示变换控件</OptLabel>
        <Divider $ml={21} />
        <Slot $ml={12}><AlignIcon {...alignA[0]} /></Slot>
        <Slot><AlignIcon {...alignA[1]} /></Slot>
        <Slot $ml={-1}><AlignIcon {...alignA[2]} /></Slot>
        <Slot $ml={10}><AlignIcon {...alignA[3]} /></Slot>
        <Divider $ml={12} />
        <Slot $ml={10}><AlignIcon {...alignB[0]} /></Slot>
        <Slot><AlignIcon {...alignB[1]} /></Slot>
        <Slot><AlignIcon {...alignB[2]} /></Slot>
        <Slot $ml={9}><AlignIcon {...alignB[3]} /></Slot>
        <Slot $ml={24}><Ic s={22}><circle {...Solid} cx="4" cy="12" r="2.400" /><circle {...Solid} cx="12" cy="12" r="2.400" /><circle {...Solid} cx="20" cy="12" r="2.400" /></Ic></Slot>
        <Divider $ml={10} />
        <OptLabel $w={60} $ml={11} $color="#717171">3D 模式：</OptLabel>
        <Slot $ml={13} $color="#7d7d7d">{threeD[0]}</Slot>
        <Slot $color="#7d7d7d">{threeD[1]}</Slot>
        <Slot $color="#7d7d7d">{threeD[2]}</Slot>
        <Slot $color="#7d7d7d">{threeD[3]}</Slot>
        <Slot $color="#7d7d7d">{threeD[4]}</Slot>
        <Spacer />
        <Slot>
          <Ic s={24} strokeWidth="2"><circle cx="10" cy="10" r="7.500" /><path strokeWidth="2.600" d="M15.500 15.500l6 6" /></Ic>
        </Slot>
        <Slot $ml={4}>
          <Ic s={24}><rect x="2" y="4" width="20" height="16" strokeWidth="2" /><path strokeWidth="2" strokeDasharray="2 1.500" d="M6 7v10" /></Ic>
        </Slot>
        <Slot $w={14} $ml={5} $color="#b8b8b8"><Chevron /></Slot>
        <Slot $ml={8}>
          <Ic s={26} strokeWidth="2.400"><path d="M8 9H3v13h18V9h-5" /><path d="M12 16V3" /><path {...Solid} d="M12 1l6 6H6z" /></Ic>
        </Slot>
        <Slot $w={5} />
      </OptionsBar>

      <Workspace>
        <ToolColumn>
          <CollapseStrip>»</CollapseStrip>
          <GripH />
          <Tool $active $more><MoveIcon /></Tool>
          {toolList.map(([name, more]) => (
            <Tool key={name} $more={!!more}>{toolIcons[name]}</Tool>
          ))}
          <SwapRow>
            <Ic s={13} stroke="none">
              <rect x="8" y="8" width="15" height="15" fill="#d2d2d2" />
              <rect x="1" y="1" width="15" height="15" fill="#111" stroke="#d2d2d2" strokeWidth="1.500" />
            </Ic>
            <Ic s={14} strokeWidth="2.200">
              <path d="M3 6h13v13" /><path {...Solid} d="M1 6l6-5v10zM16 24l-5-6h10z" />
            </Ic>
          </SwapRow>
          <ToolWell>
            <FgSwatch $x={12} $y={12} $s={23} $color="#fff" />
            <FgSwatch $x={1} $y={1} $s={22} $color="#ff3b33" />
          </ToolWell>
          <Slot $w={39} $ml={4} $mt={12}>
            <Ic w={24} h={22} vb="0 0 24 22" strokeWidth="1.800">
              <rect x="1" y="2" width="22" height="18" />
              <circle cx="12" cy="11" r="5.500" strokeDasharray="1.500 1.500" />
            </Ic>
          </Slot>
          <Tool $more $mt={6}>
            <Ic s={26} strokeWidth="1.800"><rect x="2" y="9" width="15" height="11" /><path d="M8 9V4h16v11h-7" /></Ic>
          </Tool>
        </ToolColumn>

        <DocColumn>
          <TabStrip>
            <DocTab>制作巧克力 @ 100%(RGB/8#)<CloseX>×</CloseX></DocTab>
          </TabStrip>
          <RulerRow>
            <RulerCorner />
            <HRuler>
              {hValues.map((v, i) => <HCell key={i} $ml={i === 0 ? -25 : 0}>{v}</HCell>)}
              <RulerCursor $x={1164} />
            </HRuler>
          </RulerRow>
          <DocMain>
            <VRuler>
              {vValues.map((v, i) => (
                <VCell key={i} $mt={i === 0 ? -33 : 0}>
                  {String(v).split('').map((d, j) => <VDigit key={j}>{d}</VDigit>)}
                </VCell>
              ))}
              <VCursor $y={684} />
            </VRuler>
            <CanvasArea><Paper /></CanvasArea>
            <VScroll />
          </DocMain>
          <StatusBar>
            <ZoomCell>100%</ZoomCell>
            <DocInfo>
              1000 像素 x 800 像素 (72 ppi)
              <Ic w={7} h={12} vb="0 0 7 12" strokeWidth="1"><path d="M1 1l5 5-5 5" /></Ic>
            </DocInfo>
          </StatusBar>
        </DocColumn>

        <IconDock>
          <CollapseStrip $align="flex-end">«</CollapseStrip>
          <DockGroup $h={51}>
            <GripH $m="5px auto 0" />
            <DockIcon $h={38}>
              <Ic s={26}>
                <rect x="3" y="2" width="6" height="6" /><rect x="3" y="10" width="6" height="6" />
                <rect {...Solid} x="3" y="18" width="6" height="6" />
                <path strokeWidth="2" d="M14 3c5 1 9 5 8 11-.5 4-3 7-7 8" /><path {...Solid} d="M11 4l6-3v7z" />
              </Ic>
            </DockIcon>
          </DockGroup>
          <DockGroup $h={86}>
            <GripH $m="6px auto 0" />
            <DockIcon $h={38}>
              <Ic s={26}>
                <path strokeWidth="1.600" d="M6 3h4M6 7h4M6 11h4" /><path {...Solid} d="M2 2h2v2H2zM2 6h2v2H2zM2 10h2v2H2z" />
                <path {...Solid} d="M24 3c-2 1-7 6-9 10l2.500 2.500C20 13 24 6 24 3zM13.500 14.500c-3 .5-3 4-8 6.500 5 1.500 10 0 10-4z" />
              </Ic>
            </DockIcon>
            <DockIcon $h={32}>
              <Ic s={28}>
                <ellipse {...Solid} cx="7" cy="8" rx="5" ry="3.500" />
                <path strokeWidth="2.400" d="M11 8h15M2 18h14" />
                <path {...Solid} d="M15 18l8-5c3 3 3 8 0 11z" />
              </Ic>
            </DockIcon>
          </DockGroup>
          <DockGroup $h={86}>
            <GripH $m="6px auto 0" />
            <DockIcon $h={38}><DockGlyph $size={22}>A<Caret /></DockGlyph></DockIcon>
            <DockIcon $h={32}><DockGlyph $size={24}>¶</DockGlyph></DockIcon>
          </DockGroup>
        </IconDock>

        <Panels>
          <CollapseStrip $align="flex-end">»</CollapseStrip>
          <ColorPanel>
            <PanelTabs>
              <PanelTab $active>颜色</PanelTab>
              <PanelTab>色板</PanelTab>
              <PanelTab>渐变</PanelTab>
              <PanelTab>图案</PanelTab>
              <PanelMenu>
                <Ic s={12} strokeWidth="1" vb="0 0 12 12"><path d="M1 2h10M1 5h10M1 8h10M1 11h10" /></Ic>
              </PanelMenu>
            </PanelTabs>
            <ColorBody>
              <SwatchColumn>
                <PanelWell>
                  <FgSwatch $x={15} $y={15} $s={23} $color="#fff" />
                  <FgSwatch $x={3} $y={3} $s={22} $color="#ff3b33" $ring />
                </PanelWell>
                <GamutRow>
                  <Ic s={16} stroke="none">
                    <path {...Solid} d="M12 1l11 21H1z" />
                    <path stroke="#323232" strokeWidth="2.400" d="M12 9v7M12 17.500v2" />
                  </Ic>
                  <GamutSwatch />
                </GamutRow>
              </SwatchColumn>
              <ColorField><FieldMarker /></ColorField>
              <HueWrap><HueArrow /></HueWrap>
            </ColorBody>
          </ColorPanel>
          <PanelGap />
          <LayersPanel>
            <PanelTabs $flat>
              <PanelTab $active>图层</PanelTab>
              <PanelTab>通道</PanelTab>
              <PanelTab>路径</PanelTab>
              <PanelMenu>
                <Ic s={12} strokeWidth="1" vb="0 0 12 12"><path d="M1 2h10M1 5h10M1 8h10M1 11h10" /></Ic>
              </PanelMenu>
            </PanelTabs>
            <LayerRow $h={41} $pt={10} $line>
              <DimSelect $w={107} $pl={9}>
                <Ic s={13} strokeWidth="2.400"><circle cx="10" cy="10" r="7" /><path d="M15 15l7 7" /></Ic>
                类型
                <PushRight><Chevron s={8} /></PushRight>
              </DimSelect>
              <FilterIcon $ml={14}>
                <Ic s={17} strokeWidth="1.800"><rect x="1" y="3" width="22" height="18" /><path {...Solid} d="M4 18l5-7 3 3 3-3 5 7z" /></Ic>
              </FilterIcon>
              <FilterIcon>
                <Ic s={16} strokeWidth="2"><circle cx="12" cy="12" r="10" /><path {...Solid} d="M20 5A10 10 0 015 20z" /></Ic>
              </FilterIcon>
              <FilterIcon>
                <Ic s={15}><path {...Solid} d="M2 2h20v6h-2c0-1.500-1-2.500-2.500-2.500H14v14c0 1 1 1 2.500 1V22h-9v-1.500c1.500 0 2.500 0 2.500-1v-14H6.500C5 5.500 4 6.500 4 8H2z" /></Ic>
              </FilterIcon>
              <FilterIcon>
                <Ic s={16} strokeWidth="2"><rect x="4" y="4" width="16" height="16" /><rect {...Solid} x="1" y="1" width="5" height="5" /><rect {...Solid} x="18" y="1" width="5" height="5" /><rect {...Solid} x="1" y="18" width="5" height="5" /><rect {...Solid} x="18" y="18" width="5" height="5" /></Ic>
              </FilterIcon>
              <FilterIcon>
                <Ic s={16} strokeWidth="1.800"><path d="M10 10V2h8l4 4v14h-8" /><rect {...Solid} x="2" y="12" width="12" height="11" /></Ic>
              </FilterIcon>
              <Toggle />
            </LayerRow>
            <LayerRow $h={36} $pt={4} $line>
              <DimSelect $w={146} $pl={10}>正常<PushRight><Chevron s={8} /></PushRight></DimSelect>
              <OptLabel $w={68} $ml={11} $color="#6f6f6f">不透明度：</OptLabel>
              <PercentBox $ml={2}>
                <PercentValue>100%</PercentValue>
                <PercentArrow><Chevron s={8} /></PercentArrow>
              </PercentBox>
            </LayerRow>
            <LayerRow $h={40}>
              <OptLabel $w={42} $ml={4} $color="#6f6f6f">锁定：</OptLabel>
              <LockIcon $w={26}>
                <Ic s={15} stroke="none">
                  <rect {...Solid} x="1" y="1" width="22" height="22" opacity=".95" />
                  <path fill="#323232" d="M8 4h4v4H8zM16 4h4v4h-4zM4 8h4v4H4zM12 8h4v4h-4zM8 12h4v4H8zM16 12h4v4h-4zM4 16h4v4H4zM12 16h4v4h-4z" />
                </Ic>
              </LockIcon>
              <LockIcon>
                <Ic s={17}><path {...Solid} d="M23 1c-3 2-8 8-10 12l2.500 2.500C19 12 23 5 23 1zM11.500 14.500C9 15 9 20 2 23c6 1 12 0 12-5z" /></Ic>
              </LockIcon>
              <LockIcon $w={26}>
                <Ic s={17}><path {...Solid} d="M12 1l3.500 4H13v6h6V8.500l4 3.500-4 3.500V13h-6v6h2.500L12 23l-3.500-4H11v-6H5v2.500L1 12l4-3.500V11h6V5H8.500z" /></Ic>
              </LockIcon>
              <LockIcon $w={30}>
                <Ic s={18} strokeWidth="1.600"><path d="M1 5h20M5 3v17M1 19h20M19 3v17" /><path strokeWidth="2" d="M7 7l10 10" /></Ic>
              </LockIcon>
              <LockIcon><Padlock s={15} solid /></LockIcon>
              <OptLabel $w={41} $ml={4} $color="#6f6f6f">填充：</OptLabel>
              <PercentBox>
                <PercentValue>100%</PercentValue>
                <PercentArrow><Chevron s={8} /></PercentArrow>
              </PercentBox>
            </LayerRow>
            <LayerList>
              <LayerItem>
                <EyeCell><Eye /></EyeCell>
                <LayerBody>
                  <Thumb />
                  背景
                  <PushRight><Padlock s={15} /></PushRight>
                </LayerBody>
              </LayerItem>
            </LayerList>
            <PanelFooter>
              <FooterIcon $w={33} $color="#6f6f6f">
                <Ic s={18} strokeWidth="2"><rect x="1" y="7" width="12" height="10" rx="5" /><rect x="11" y="7" width="12" height="10" rx="5" /></Ic>
              </FooterIcon>
              <FooterIcon $w={36} $color="#6f6f6f"><FxText>fx</FxText></FooterIcon>
              <FooterIcon $w={33} $color="#c8c8c8">
                <Ic s={16} stroke="none"><path {...Solid} fillRule="evenodd" d="M1 3h22v18H1zM12 7a5 5 0 100 10 5 5 0 000-10z" /></Ic>
              </FooterIcon>
              <FooterIcon $w={33} $color="#c8c8c8">
                <Ic s={16} strokeWidth="2"><circle cx="12" cy="12" r="10" /><path {...Solid} d="M20 5A10 10 0 015 20z" /></Ic>
              </FooterIcon>
              <FooterIcon $w={33} $color="#c8c8c8">
                <Ic s={18} stroke="none"><path {...Solid} d="M2 4h8l2 3h10v14H2z" /></Ic>
              </FooterIcon>
              <FooterIcon $w={34} $color="#c8c8c8">
                <Ic s={18} strokeWidth="1.800"><rect x="4" y="1" width="16" height="22" /><path d="M8 12h8M12 8v8" /></Ic>
              </FooterIcon>
              <FooterIcon $w={33} $color="#6f6f6f">
                <Ic s={18} strokeWidth="1.600"><path d="M3 5h18M9 5V2h6v3M5 5v18h14V5M9 9v10M12 9v10M15 9v10" /></Ic>
              </FooterIcon>
            </PanelFooter>
          </LayersPanel>
        </Panels>
      </Workspace>

      <Taskbar>
        {taskItems.map((item, i) => (
          <TaskButton key={i} $w={i < 16 ? 60 : 59.2} $ml={i === 3 ? 2 : 0} $active={i === 25} $open={i === 5 || i === 25}>
            {item}
          </TaskButton>
        ))}
        <Tray>
          <TraySlot $w={30} $ml={2}>
            <Ic s={18} strokeWidth="1.600"><path d="M3 17l9-11 9 11" /></Ic>
          </TraySlot>
          <TraySlot $w={30}><WeChat s={20} /></TraySlot>
          <TraySlot $w={31} $ml={28}>
            <Ic s={22} strokeWidth="1.600"><rect x="8" y="8" width="14" height="11" /><rect {...Solid} x="10" y="10" width="10" height="7" /><path strokeWidth="2" d="M2 3v5M6 3v5M4 8v10h4" /></Ic>
          </TraySlot>
          <TraySlot $w={31}>
            <Ic s={22} strokeWidth="1.300"><path d="M6 2h16v15H6zM14 17v5M9 22h10" /><path d="M2 4h6v8H2z" /></Ic>
          </TraySlot>
          <TraySlot $w={30}>
            <Ic s={22} strokeWidth="1.300"><path d="M3 9h4l6-6v18l-6-6H3zM16 8c1.500 2 1.500 6 0 8M19 5c3 4 3 10 0 14" /></Ic>
          </TraySlot>
          <TraySlot $w={29}>
            <Ic s={22} strokeWidth="1.500"><rect x="4" y="7" width="16" height="9" /><path d="M12 1v22" /></Ic>
          </TraySlot>
          <TraySlot $w={40}>
            <Tile $w={20} $h={22} $bg="#f04a23" $r={5} $size={15} $weight={700}>S</Tile>
          </TraySlot>
          <Clock>
            21:41
            <br />
            2020/11/23
          </Clock>
          <TraySlot $w={48}>
            <Ic s={24} strokeWidth="1.600"><path d="M3 2h18v17h-5l-3 3-3-3H3z" /></Ic>
          </TraySlot>
          <ShowDesktop />
        </Tray>
      </Taskbar>
    </Frame>
  )
}
